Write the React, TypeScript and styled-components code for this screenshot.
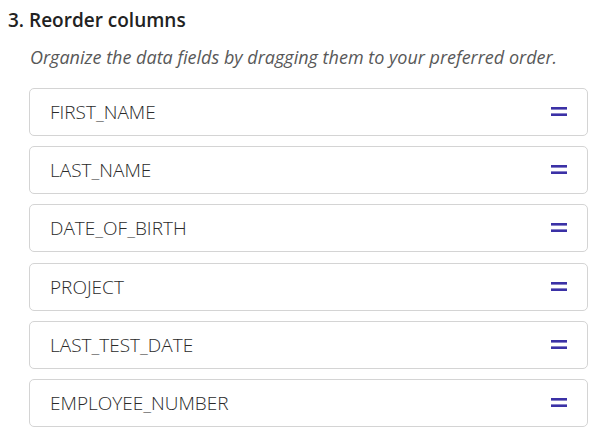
import { createGlobalStyle, styled } from "styled-components";

const GlobalStyle = createGlobalStyle`
  body {
    margin: 0;
    background: #ffffff;
    font-family: "Open Sans", "Liberation Sans", sans-serif;
  }
`;

const fields = [
  "FIRST_NAME",
  "LAST_NAME",
  "DATE_OF_BIRTH",
  "PROJECT",
  "LAST_TEST_DATE",
  "EMPLOYEE_NUMBER",
];

const DragHandle = () => (
  <svg width="16" height="10" viewBox="0 0 16 10">
    <rect x="0" y="0" width="16" height="2.6" fill="#3b31a6" />
    <rect x="0" y="6.4" width="16" height="2.6" fill="#3b31a6" />
  </svg>
);

export default function App() {
  return (
    <>
      <GlobalStyle />
      <Section>
        <Title>3. Reorder columns</Title>
        <Hint>Organize the data fields by dragging them to your preferred order.</Hint>
        <List>
          {fields.map((field) => (
            <Row key={field}>
              <FieldName>{field}</FieldName>
              <Handle>
                <DragHandle />
              </Handle>
            </Row>
          ))}
        </List>
      </Section>
    </>
  );
}

const Section = styled.section`
  padding: 6px 18px 0 8px;
`;

const Title = styled.h3`
  margin: 0;
  font-size: 19px;
  font-weight: 600;
  line-height: 28px;
  color: #222222;
`;

const Hint = styled.p`
  margin: 10px 0 0 22px;
  font-size: 18px;
  font-style: italic;
  line-height: 26px;
  color: #585858;
`;

const List = styled.div`
  display: flex;
  flex-direction: column;
  gap: 10.2px;
  margin: 18px 0 0 21px;
`;

const Row = styled.div`
  display: flex;
  align-items: center;
  justify-content: space-between;
  height: 48px;
  box-sizing: border-box;
  padding: 0 20px 0 20px;
  border: 1px solid #d4d4d4;
  border-radius: 5px;
  background: #ffffff;
`;

const FieldName = styled.span`
  font-size: 19px;
  font-weight: 300;
  color: #2a2a2a;
`;

const Handle = styled.span`
  display: flex;
  align-items: center;
`;
